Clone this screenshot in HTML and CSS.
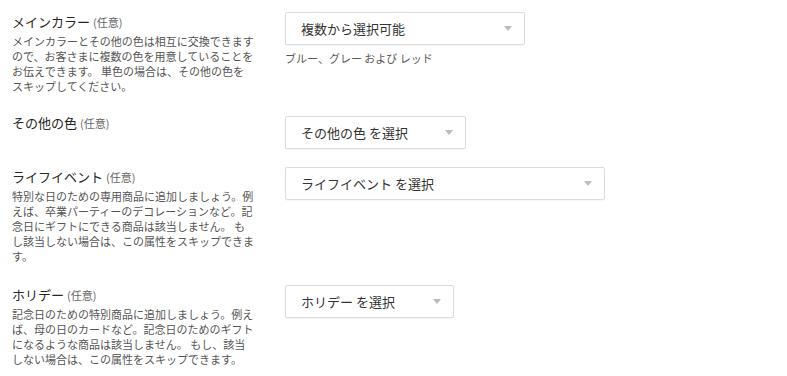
FILE: index.html
```html
<!DOCTYPE html>
<html lang="ja">
<head>
<meta charset="utf-8">
<link rel="stylesheet" href="styles.css">
</head>
<body>
<div class="form">
  <div class="row row-main">
    <div class="info info-pad">
      <div class="label">メインカラー <span class="opt">(任意)</span></div>
      <p class="desc">メインカラーとその他の色は相互に交換できますので、お客さまに複数の色を用意していることをお伝えできます。 単色の場合は、その他の色をスキップしてください。</p>
    </div>
    <div class="control">
      <div class="select w-main"><span>複数から選択可能</span><i class="arrow"></i></div>
      <div class="hint">ブルー、グレー および レッド</div>
    </div>
  </div>

  <div class="row row-other">
    <div class="info">
      <div class="label">その他の色 <span class="opt">(任意)</span></div>
    </div>
    <div class="control ctl-other">
      <div class="select w-other"><span>その他の色 を選択</span><i class="arrow"></i></div>
    </div>
  </div>

  <div class="row row-life">
    <div class="info info-pad">
      <div class="label">ライフイベント <span class="opt">(任意)</span></div>
      <p class="desc">特別な日のための専用商品に追加しましょう。例えば、卒業パーティーのデコレーションなど。記念日にギフトにできる商品は該当しません。 もし該当しない場合は、この属性をスキップできます。</p>
    </div>
    <div class="control">
      <div class="select w-life"><span>ライフイベント を選択</span><i class="arrow"></i></div>
    </div>
  </div>

  <div class="row row-holiday">
    <div class="info info-pad">
      <div class="label">ホリデー <span class="opt">(任意)</span></div>
      <p class="desc">記念日のための特別商品に追加しましょう。例えば、母の日のカードなど。記念日のためのギフトになるような商品は該当しません。 もし、該当しない場合は、この属性をスキップできます。</p>
    </div>
    <div class="control">
      <div class="select w-holiday"><span>ホリデー を選択</span><i class="arrow"></i></div>
    </div>
  </div>
</div>
</body>
</html>
```
FILE: styles.css
```css
html, body {
  margin: 0;
  padding: 0;
  background: #ffffff;
}
body {
  font-family: "Noto Sans CJK JP", "Noto Sans", sans-serif;
  color: #333333;
}
.form {
  display: flex;
  flex-direction: column;
}
.row {
  display: flex;
  align-items: flex-start;
}
.row-main { margin-top: 12px; }
.row-other { margin-top: 20px; }
.row-life { margin-top: 18px; }
.row-holiday { margin-top: 21px; }

.info {
  flex: 0 0 285px;
  box-sizing: border-box;
  padding: 0 30px 0 12px;
}
.info-pad { padding-top: 1px; }
.label {
  font-size: 13px;
  line-height: 18px;
  color: #262626;
  white-space: nowrap;
}
.opt {
  font-size: 11px;
  color: #666666;
}
.desc {
  margin: 3px 0 0;
  font-size: 11px;
  line-height: 15px;
  color: #555555;
}
.control {
  display: flex;
  flex-direction: column;
}
.ctl-other { margin-top: 2px; }
.select {
  box-sizing: border-box;
  height: 33px;
  display: flex;
  align-items: center;
  justify-content: space-between;
  padding: 0 12px 0 15px;
  border: 1px solid #dcdcdc;
  border-radius: 2px;
  background: #ffffff;
  font-size: 13px;
  color: #333333;
  box-shadow: 0 1px 1px rgba(0,0,0,0.04);
}
.w-main { width: 240px; }
.w-other { width: 181px; }
.w-life { width: 320px; }
.w-holiday { width: 169px; }
.arrow {
  width: 0;
  height: 0;
  border-left: 4px solid transparent;
  border-right: 4px solid transparent;
  border-top: 5px solid #bbbbbb;
}
.hint {
  margin-top: 6px;
  font-size: 11px;
  line-height: 15px;
  color: #595959;
}
```
